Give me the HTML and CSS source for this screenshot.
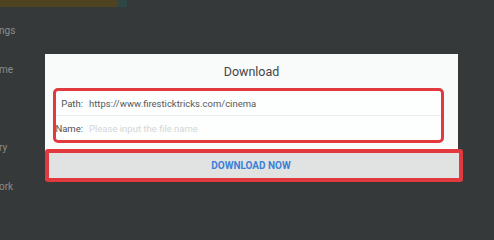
FILE: index.html
```html
<!DOCTYPE html>
<html>
<head>
<meta charset="utf-8">
<link rel="stylesheet" href="styles.css">
</head>
<body>
<div class="screen">
  <div class="topbar"><div class="topbar-main"></div><div class="topbar-end"></div></div>
  <ul class="menu">
    <li>ngs</li>
    <li>me</li>
    <li></li>
    <li>ry</li>
    <li>ork</li>
  </ul>
  <div class="dialog">
    <div class="title">Download</div>
    <div class="fields">
      <div class="row"><span class="label">Path:</span><span class="value">https://www.firesticktricks.com/cinema</span></div>
      <div class="row"><span class="label">Name:</span><span class="placeholder">Please input the file name</span></div>
    </div>
    <div class="button">DOWNLOAD NOW</div>
  </div>
</div>
</body>
</html>
```
FILE: styles.css
```css
html, body {
  margin: 0;
  padding: 0;
}
body {
  width: 494px;
  height: 218px;
  overflow: hidden;
  background: #363939;
  font-family: Roboto, "Liberation Sans", sans-serif;
}
.screen {
  position: relative;
  width: 494px;
  height: 218px;
}
.topbar {
  display: flex;
  height: 7px;
}
.topbar-main {
  width: 117px;
  background: #4d4321;
}
.topbar-end {
  width: 10px;
  background: #2e4646;
}
.menu {
  list-style: none;
  margin: 0;
  padding: 17px 0 0 0;
  display: flex;
  flex-direction: column;
}
.menu li {
  height: 39px;
  line-height: 14px;
  font-size: 10px;
  color: #8b8d8d;
  margin-left: -1px;
}
.dialog {
  position: absolute;
  left: 45px;
  top: 54px;
  width: 413px;
  height: 126px;
  background: #f9fbfb;
}
.title {
  height: 34px;
  display: flex;
  align-items: center;
  justify-content: center;
  font-size: 12.5px;
  color: #444646;
  padding-top: 1px;
  box-sizing: border-box;
}
.fields {
  margin: 0 14px 0 8px;
  height: 55px;
  box-sizing: border-box;
  border: 3px solid #e1393e;
  border-radius: 5px;
  background: #fdfefe;
  display: flex;
  flex-direction: column;
}
.row {
  flex: 1;
  display: flex;
  align-items: center;
  font-size: 9.5px;
}
.row + .row {
  border-top: 1px solid #eceeee;
}
.label {
  width: 30px;
  text-align: right;
  color: #4f5151;
  margin-left: -3px;
}
.value {
  margin-left: 6px;
  color: #575959;
}
.placeholder {
  margin-left: 6px;
  color: #d4d6d6;
}
.button {
  margin-top: 6px;
  margin-right: -5px;
  height: 33px;
  box-sizing: border-box;
  border: 4px solid #e1393e;
  border-radius: 3px;
  background: #e1e3e3;
  display: flex;
  align-items: center;
  justify-content: center;
  font-size: 10px;
  font-weight: bold;
  color: #3b80d6;
  padding-right: 6px;
}
```
